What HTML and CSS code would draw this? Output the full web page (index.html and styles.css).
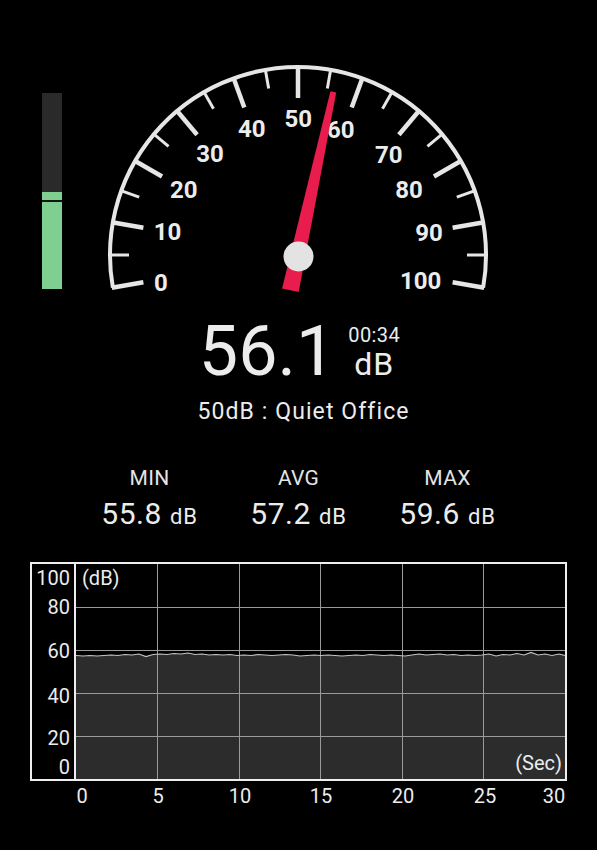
FILE: index.html
```html
<!DOCTYPE html>
<html lang="en">
<head>
<meta charset="utf-8">
<title>Sound Meter</title>
<link rel="stylesheet" href="styles.css">
</head>
<body>
<main class="screen">
  <section class="gauge-row">
    <div class="meter">
      <div class="meter-fill" style="height:97px"><div class="peak"></div></div>
    </div>
    <svg class="gauge" width="400" height="245" viewBox="100 55 400 245">
      <path class="arc" d="M112.86,287.65 A188,188 0 1 1 483.14,287.65"/>
      <g transform="translate(298,255)">
        <g class="major">
          <line x1="-189" y1="0" x2="-157" y2="0" transform="rotate(-10)"/>
          <line x1="-189" y1="0" x2="-157" y2="0" transform="rotate(10)"/>
          <line x1="-189" y1="0" x2="-157" y2="0" transform="rotate(30)"/>
          <line x1="-189" y1="0" x2="-157" y2="0" transform="rotate(50)"/>
          <line x1="-189" y1="0" x2="-157" y2="0" transform="rotate(70)"/>
          <line x1="-189" y1="0" x2="-157" y2="0" transform="rotate(90)"/>
          <line x1="-189" y1="0" x2="-157" y2="0" transform="rotate(110)"/>
          <line x1="-189" y1="0" x2="-157" y2="0" transform="rotate(130)"/>
          <line x1="-189" y1="0" x2="-157" y2="0" transform="rotate(150)"/>
          <line x1="-189" y1="0" x2="-157" y2="0" transform="rotate(170)"/>
          <line x1="-189" y1="0" x2="-157" y2="0" transform="rotate(190)"/>
        </g>
        <g class="minor">
          <line x1="-187" y1="0" x2="-169" y2="0" transform="rotate(0)"/>
          <line x1="-187" y1="0" x2="-169" y2="0" transform="rotate(20)"/>
          <line x1="-187" y1="0" x2="-169" y2="0" transform="rotate(40)"/>
          <line x1="-187" y1="0" x2="-169" y2="0" transform="rotate(60)"/>
          <line x1="-187" y1="0" x2="-169" y2="0" transform="rotate(80)"/>
          <line x1="-187" y1="0" x2="-169" y2="0" transform="rotate(100)"/>
          <line x1="-187" y1="0" x2="-169" y2="0" transform="rotate(120)"/>
          <line x1="-187" y1="0" x2="-169" y2="0" transform="rotate(140)"/>
          <line x1="-187" y1="0" x2="-169" y2="0" transform="rotate(160)"/>
          <line x1="-187" y1="0" x2="-169" y2="0" transform="rotate(180)"/>
        </g>
      </g>
      <g class="scale">
        <text x="161" y="290.5">0</text>
        <text x="167.5" y="239.5">10</text>
        <text x="183.7" y="197.5">20</text>
        <text x="210" y="162">30</text>
        <text x="251.7" y="137">40</text>
        <text x="298.3" y="126.5">50</text>
        <text x="340.7" y="137.5">60</text>
        <text x="388.7" y="163">70</text>
        <text x="409" y="197.5">80</text>
        <text x="429" y="240.5">90</text>
        <text x="420.7" y="289">100</text>
      </g>
      <polygon class="needle" points="336.2,92.4 298.7,292.0 282.1,288.4 330.4,91.2"/>
      <circle class="knob" cx="298.5" cy="256.5" r="15"/>
    </svg>
  </section>

  <section class="reading">
    <span class="value">56.1</span>
    <div class="side">
      <span class="time">00:34</span>
      <span class="unit">dB</span>
    </div>
  </section>

  <p class="level">50dB : Quiet Office</p>

  <section class="stats">
    <div class="stat"><span class="label">MIN</span><span class="num">55.8 <small>dB</small></span></div>
    <div class="stat"><span class="label">AVG</span><span class="num">57.2 <small>dB</small></span></div>
    <div class="stat"><span class="label">MAX</span><span class="num">59.6 <small>dB</small></span></div>
  </section>

  <svg class="chart" width="597" height="255" viewBox="0 555 597 255">
    <path class="area" d="M76,776 L76,652.5 83,653 90,652.5 97,653 104,652.5 111,652 118,652.5 125,651.5 132,652 139,651 146,653.5 153,651.5 160,651 167,651.5 174,650.5 181,651 188,650 195,651.5 202,651 209,652 216,651.5 223,652 230,651.5 237,652.5 244,652 251,652.5 258,651.5 265,652 272,652.5 279,652 286,651.5 293,652 300,653 307,652.5 314,652 321,652.5 328,652 335,652.5 342,653 349,652.5 356,652 363,652.5 370,651.5 377,652 384,652.5 391,652 398,652.5 405,653 412,652 419,651 426,652 433,651.5 440,651 447,652 454,651.5 461,652.5 468,652 475,652.5 482,652 489,651 496,653 503,651.5 510,652 517,650.5 524,652 531,649.5 538,652 545,651 552,652.5 559,651 565,652.5 L565,776 Z"/>
    <g class="grid">
      <line x1="76" y1="604.5" x2="565" y2="604.5"/>
      <line x1="76" y1="647.5" x2="565" y2="647.5"/>
      <line x1="76" y1="690.5" x2="565" y2="690.5"/>
      <line x1="76" y1="733.5" x2="565" y2="733.5"/>
      <line x1="157.5" y1="561" x2="157.5" y2="776"/>
      <line x1="239.5" y1="561" x2="239.5" y2="776"/>
      <line x1="320.5" y1="561" x2="320.5" y2="776"/>
      <line x1="402.5" y1="561" x2="402.5" y2="776"/>
      <line x1="483.5" y1="561" x2="483.5" y2="776"/>
    </g>
    <polyline class="trace" points="76,652.5 83,653 90,652.5 97,653 104,652.5 111,652 118,652.5 125,651.5 132,652 139,651 146,653.5 153,651.5 160,651 167,651.5 174,650.5 181,651 188,650 195,651.5 202,651 209,652 216,651.5 223,652 230,651.5 237,652.5 244,652 251,652.5 258,651.5 265,652 272,652.5 279,652 286,651.5 293,652 300,653 307,652.5 314,652 321,652.5 328,652 335,652.5 342,653 349,652.5 356,652 363,652.5 370,651.5 377,652 384,652.5 391,652 398,652.5 405,653 412,652 419,651 426,652 433,651.5 440,651 447,652 454,651.5 461,652.5 468,652 475,652.5 482,652 489,651 496,653 503,651.5 510,652 517,650.5 524,652 531,649.5 538,652 545,651 552,652.5 559,651 565,652.5"/>
    <rect class="frame" x="31" y="560" width="535" height="217"/>
    <line class="divider" x1="75" y1="560" x2="75" y2="777"/>
    <g class="ylabels">
      <text x="70" y="582">100</text>
      <text x="70" y="611">80</text>
      <text x="70" y="655">60</text>
      <text x="70" y="700">40</text>
      <text x="70" y="742">20</text>
      <text x="70" y="771">0</text>
    </g>
    <text class="axis-unit" x="82" y="582">(dB)</text>
    <text class="axis-unit end" x="562" y="767">(Sec)</text>
    <g class="xlabels">
      <text x="82" y="800">0</text>
      <text x="158" y="800">5</text>
      <text x="240" y="800">10</text>
      <text x="321" y="800">15</text>
      <text x="403" y="800">20</text>
      <text x="485" y="800">25</text>
      <text x="554" y="800">30</text>
    </g>
  </svg>
</main>
</body>
</html>
```

FILE: styles.css
```css
html, body {
  margin: 0;
  padding: 0;
  background: #000;
}

body {
  font-family: Roboto, "Liberation Sans", Arial, sans-serif;
  color: #ececec;
}

.screen {
  width: 597px;
  height: 850px;
  overflow: hidden;
  background: #000;
}

/* ---------- gauge row ---------- */
.gauge-row {
  display: flex;
  align-items: flex-start;
  padding: 55px 0 0 42px;
}

.meter {
  margin-top: 38px;
  width: 20px;
  height: 196px;
  background: #2a2a2a;
  display: flex;
  flex-direction: column;
  justify-content: flex-end;
}

.meter-fill {
  background: #7fcf90;
}

.peak {
  margin-top: 8px;
  height: 1.5px;
  background: #141414;
}

.gauge {
  display: block;
  margin-left: 38px;
}

.gauge .arc {
  fill: none;
  stroke: #e6e6e6;
  stroke-width: 4;
}

.gauge .major line {
  stroke: #e6e6e6;
  stroke-width: 4.5;
}

.gauge .minor line {
  stroke: #e6e6e6;
  stroke-width: 3;
}

.gauge .scale text {
  font-family: Roboto, "Liberation Sans", Arial, sans-serif;
  font-size: 24px;
  font-weight: 700;
  fill: #ececec;
  text-anchor: middle;
}

.gauge .needle {
  fill: #e81c4d;
}

.gauge .knob {
  fill: #e3e3e3;
}

/* ---------- reading ---------- */
.reading {
  display: flex;
  justify-content: center;
  align-items: flex-end;
  gap: 13px;
  margin-top: 16px;
  padding-left: 2px;
}

.value {
  font-size: 70px;
  line-height: 70px;
  font-weight: 400;
  color: #ececec;
}

.side {
  display: flex;
  flex-direction: column;
  align-items: center;
}

.time {
  font-size: 20px;
  line-height: 15px;
  letter-spacing: 0.4px;
}

.unit {
  font-size: 32px;
  line-height: 43px;
  letter-spacing: 1px;
}

.level {
  margin: 12px 0 0;
  text-align: center;
  font-size: 23px;
  line-height: 28px;
  letter-spacing: 1.1px;
  padding-left: 10px;
}

/* ---------- stats ---------- */
.stats {
  display: grid;
  grid-template-columns: repeat(3, 149px);
  justify-content: center;
  margin-top: 40px;
}

.stat {
  display: flex;
  flex-direction: column;
  align-items: center;
}

.label {
  font-size: 21px;
  line-height: 24px;
  color: #e4e4e4;
  letter-spacing: 0.3px;
}

.num {
  margin-top: 6px;
  font-size: 30px;
  line-height: 36px;
  letter-spacing: 0.6px;
}

.num small {
  font-size: 22px;
  letter-spacing: 0.8px;
}

/* ---------- chart ---------- */
.chart {
  display: block;
  margin-top: 23px;
}

.chart .area {
  fill: #2c2c2c;
}

.chart .grid line {
  stroke: #9a9a9a;
  stroke-width: 1;
}

.chart .trace {
  fill: none;
  stroke: #c4c4c4;
  stroke-width: 1.2;
}

.chart .frame {
  fill: none;
  stroke: #eeeeee;
  stroke-width: 2;
}

.chart .divider {
  stroke: #eeeeee;
  stroke-width: 2;
}

.chart text {
  font-family: Roboto, "Liberation Sans", Arial, sans-serif;
  font-size: 20px;
  fill: #ececec;
}

.chart .ylabels text {
  text-anchor: end;
}

.chart .axis-unit.end {
  text-anchor: end;
}

.chart .xlabels text {
  text-anchor: middle;
}
```
